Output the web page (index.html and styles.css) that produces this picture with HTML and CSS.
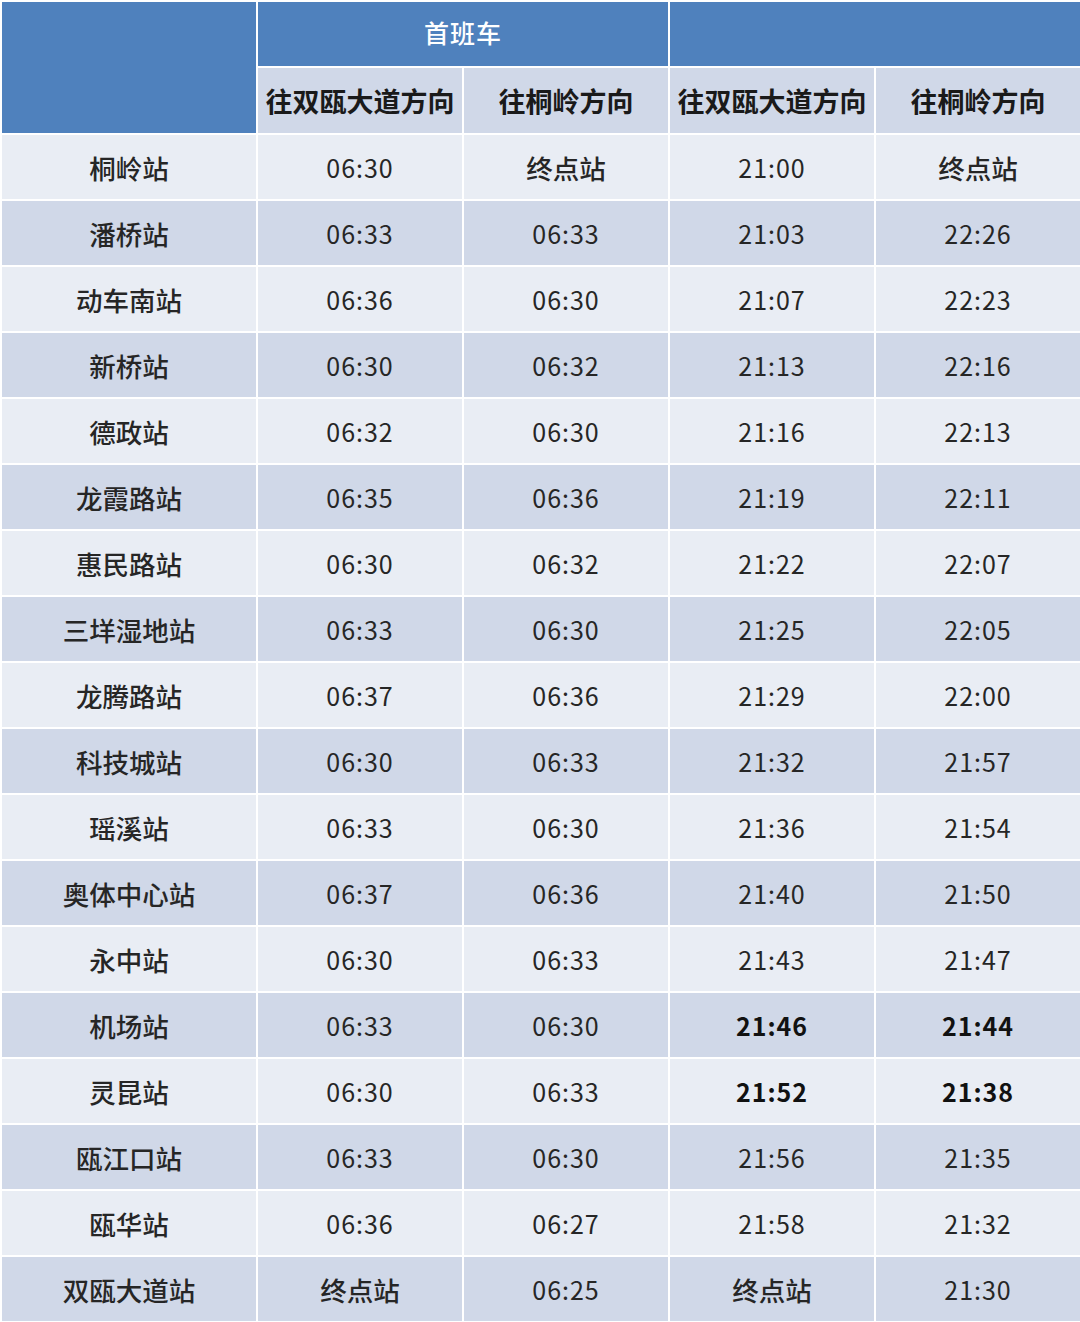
FILE: index.html
```html
<!DOCTYPE html>
<html lang="zh-CN">
<head>
<meta charset="utf-8">
<link rel="stylesheet" href="styles.css">
</head>
<body>
<div class="timetable">
  <div class="hd corner"></div>
  <div class="hd group first">首班车</div>
  <div class="hd group last"></div>
  <div class="sub">往双瓯大道方向</div>
  <div class="sub">往桐岭方向</div>
  <div class="sub">往双瓯大道方向</div>
  <div class="sub">往桐岭方向</div>

  <div class="c a name">桐岭站</div><div class="c a">06:30</div><div class="c a name">终点站</div><div class="c a">21:00</div><div class="c a name">终点站</div>
  <div class="c b name">潘桥站</div><div class="c b">06:33</div><div class="c b">06:33</div><div class="c b">21:03</div><div class="c b">22:26</div>
  <div class="c a name">动车南站</div><div class="c a">06:36</div><div class="c a">06:30</div><div class="c a">21:07</div><div class="c a">22:23</div>
  <div class="c b name">新桥站</div><div class="c b">06:30</div><div class="c b">06:32</div><div class="c b">21:13</div><div class="c b">22:16</div>
  <div class="c a name">德政站</div><div class="c a">06:32</div><div class="c a">06:30</div><div class="c a">21:16</div><div class="c a">22:13</div>
  <div class="c b name">龙霞路站</div><div class="c b">06:35</div><div class="c b">06:36</div><div class="c b">21:19</div><div class="c b">22:11</div>
  <div class="c a name">惠民路站</div><div class="c a">06:30</div><div class="c a">06:32</div><div class="c a">21:22</div><div class="c a">22:07</div>
  <div class="c b name">三垟湿地站</div><div class="c b">06:33</div><div class="c b">06:30</div><div class="c b">21:25</div><div class="c b">22:05</div>
  <div class="c a name">龙腾路站</div><div class="c a">06:37</div><div class="c a">06:36</div><div class="c a">21:29</div><div class="c a">22:00</div>
  <div class="c b name">科技城站</div><div class="c b">06:30</div><div class="c b">06:33</div><div class="c b">21:32</div><div class="c b">21:57</div>
  <div class="c a name">瑶溪站</div><div class="c a">06:33</div><div class="c a">06:30</div><div class="c a">21:36</div><div class="c a">21:54</div>
  <div class="c b name">奥体中心站</div><div class="c b">06:37</div><div class="c b">06:36</div><div class="c b">21:40</div><div class="c b">21:50</div>
  <div class="c a name">永中站</div><div class="c a">06:30</div><div class="c a">06:33</div><div class="c a">21:43</div><div class="c a">21:47</div>
  <div class="c b name">机场站</div><div class="c b">06:33</div><div class="c b">06:30</div><div class="c b strong">21:46</div><div class="c b strong">21:44</div>
  <div class="c a name">灵昆站</div><div class="c a">06:30</div><div class="c a">06:33</div><div class="c a strong">21:52</div><div class="c a strong">21:38</div>
  <div class="c b name">瓯江口站</div><div class="c b">06:33</div><div class="c b">06:30</div><div class="c b">21:56</div><div class="c b">21:35</div>
  <div class="c a name">瓯华站</div><div class="c a">06:36</div><div class="c a">06:27</div><div class="c a">21:58</div><div class="c a">21:32</div>
  <div class="c b name">双瓯大道站</div><div class="c b name">终点站</div><div class="c b">06:25</div><div class="c b name">终点站</div><div class="c b">21:30</div>
</div>
</body>
</html>
```

FILE: styles.css
```css
html, body {
  margin: 0;
  padding: 0;
  background: #ffffff;
}

body {
  font-family: "Noto Sans CJK SC", "Noto Sans", sans-serif;
  color: #1f1f1f;
}

.timetable {
  display: grid;
  grid-template-columns: 254px repeat(4, 204px);
  grid-template-rows: 64px 65px repeat(18, 64px);
  gap: 2px;
  padding: 2px 0 0 2px;
  background: #ffffff;
  width: 1080px;
  box-sizing: border-box;
}

.hd {
  background: #4f81bd;
  color: #ffffff;
  display: flex;
  align-items: center;
  justify-content: center;
}

.corner {
  grid-row: 1 / span 2;
}

.group {
  grid-column: span 2;
  font-size: 25px;
  font-weight: 500;
  letter-spacing: 1px;
  padding-bottom: 4px;
}

.sub {
  background: #d0d8e8;
  display: flex;
  align-items: center;
  justify-content: center;
  font-size: 27px;
  font-weight: 700;
  color: #1a1a1a;
}

.c {
  display: flex;
  align-items: center;
  justify-content: center;
  font-size: 25px;
  letter-spacing: 1px;
  color: #262626;
}

.name {
  letter-spacing: 0;
  font-size: 26.5px;
  font-weight: 500;
}

.a {
  background: #e9edf4;
}

.b {
  background: #d0d8e8;
}

.strong {
  font-weight: 700;
  color: #111111;
}
```
